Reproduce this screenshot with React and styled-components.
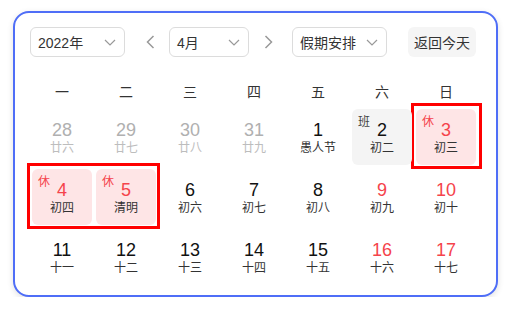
import React from 'react'
import styled, {createGlobalStyle} from 'styled-components'

const GlobalStyle = createGlobalStyle`
  html, body {
    margin: 0;
    padding: 0;
    background: #fff;
  }
  body {
    font-family: "Liberation Sans", "Noto Sans CJK SC", sans-serif;
    color: #333;
  }
`

const Page = styled.div`
  padding: 11px 0 0 13px;
`

const Card = styled.div`
  width: 485px;
  height: 286px;
  box-sizing: border-box;
  border: 2px solid #4f6ef7;
  border-radius: 16px;
  padding: 14px 18px 0 15px;
  background: #fff;
  box-shadow: 0 2px 6px rgba(0, 0, 0, 0.12);
`

const Toolbar = styled.div`
  display: flex;
  align-items: center;
  height: 30px;
`

const Select = styled.div`
  width: ${p => p.w}px;
  height: 30px;
  margin-left: ${p => p.ml || 0}px;
  box-sizing: border-box;
  border: 1px solid #dcdcdc;
  border-radius: 6px;
  display: flex;
  align-items: center;
  justify-content: space-between;
  padding: 0 8px 0 7px;
  font-size: 14px;
  color: #333;
`

const ArrowBtn = styled.div`
  width: 24px;
  height: 30px;
  margin-left: ${p => p.ml}px;
  display: flex;
  align-items: center;
  justify-content: center;
`

const TodayBtn = styled.div`
  width: 68px;
  height: 30px;
  margin-left: 21px;
  border-radius: 6px;
  background: #f5f5f5;
  display: flex;
  align-items: center;
  justify-content: center;
  font-size: 14px;
  color: #333;
`

const WeekHead = styled.div`
  display: grid;
  grid-template-columns: repeat(7, 64px);
  margin-top: 17px;
  height: 33px;
  align-items: center;
  font-size: 14px;
  color: #333;
  text-align: center;
`

const Grid = styled.div`
  display: grid;
  grid-template-columns: repeat(7, 64px);
  grid-template-rows: repeat(3, 60px);
`

const Cell = styled.div`
  position: relative;
  grid-row: ${p => p.row};
  grid-column: ${p => p.col};
  margin: 2px;
  border-radius: 6px;
  background: ${p => (p.tag === '休' ? '#fee5e6' : p.tag === '班' ? '#f4f4f4' : 'transparent')};
  display: flex;
  flex-direction: column;
  align-items: center;
  padding-top: 11px;
  box-sizing: border-box;
`

const Num = styled.div`
  font-size: 18px;
  line-height: 20px;
  color: ${p => (p.muted ? '#b0b0b0' : p.red ? '#f5434b' : '#111')};
`

const Lunar = styled.div`
  font-size: 12px;
  line-height: 16px;
  color: ${p => (p.muted ? '#bdbdbd' : '#333')};
`

const Tag = styled.span`
  position: absolute;
  left: 6px;
  top: 6px;
  font-size: 12px;
  line-height: 14px;
  color: ${p => (p.off ? '#f5434b' : '#444')};
`

const Mark = styled.div`
  grid-row: ${p => p.row};
  grid-column: ${p => p.col};
  margin: -4px ${p => p.mr}px -2px -3px;
  border: 3px solid #f00;
  pointer-events: none;
`

const Chevron = () => (
  <svg width="12" height="7" viewBox="0 0 12 7">
    <path d="M1 1l5 5 5-5" fill="none" stroke="#999" strokeWidth="1.2"/>
  </svg>
)

const Arrow = ({dir}) => (
  <svg width="9" height="14" viewBox="0 0 9 14">
    <path d={dir === 'left' ? 'M7.5 1L1.5 7l6 6' : 'M1.5 1l6 6-6 6'} fill="none" stroke="#999" strokeWidth="1.5"/>
  </svg>
)

const weekdays = ['一', '二', '三', '四', '五', '六', '日']

const days = [
  {d: 28, l: '廿六', muted: true}, {d: 29, l: '廿七', muted: true}, {d: 30, l: '廿八', muted: true},
  {d: 31, l: '廿九', muted: true}, {d: 1, l: '愚人节'}, {d: 2, l: '初二', tag: '班'},
  {d: 3, l: '初三', tag: '休'},
  {d: 4, l: '初四', tag: '休'}, {d: 5, l: '清明', tag: '休'}, {d: 6, l: '初六'}, {d: 7, l: '初七'},
  {d: 8, l: '初八'}, {d: 9, l: '初九'}, {d: 10, l: '初十'},
  {d: 11, l: '十一'}, {d: 12, l: '十二'}, {d: 13, l: '十三'}, {d: 14, l: '十四'},
  {d: 15, l: '十五'}, {d: 16, l: '十六'}, {d: 17, l: '十七'},
]

export default function App() {
  return (
    <Page>
      <GlobalStyle/>
      <Card>
        <Toolbar>
          <Select w={95}>2022年<Chevron/></Select>
          <ArrowBtn ml={13}><Arrow dir="left"/></ArrowBtn>
          <Select w={80} ml={7}>4月<Chevron/></Select>
          <ArrowBtn ml={7}><Arrow dir="right"/></ArrowBtn>
          <Select w={95} ml={12}>假期安排<Chevron/></Select>
          <TodayBtn>返回今天</TodayBtn>
        </Toolbar>
        <WeekHead>
          {weekdays.map(w => <div key={w}>{w}</div>)}
        </WeekHead>
        <Grid>
          {days.map((item, i) => {
            const row = Math.floor(i / 7) + 1
            const col = (i % 7) + 1
            const weekend = col >= 6
            const red = !item.muted && (item.tag === '休' || (weekend && item.tag !== '班'))
            return (
              <Cell key={i} row={row} col={col} tag={item.tag}>
                {item.tag && <Tag off={item.tag === '休'}>{item.tag}</Tag>}
                <Num muted={item.muted} red={red}>{item.d}</Num>
                <Lunar muted={item.muted}>{item.l}</Lunar>
              </Cell>
            )
          })}
          <Mark row={1} col={7} mr={-4}/>
          <Mark row={2} col="1 / span 2" mr={-2}/>
        </Grid>
      </Card>
    </Page>
  )
}
